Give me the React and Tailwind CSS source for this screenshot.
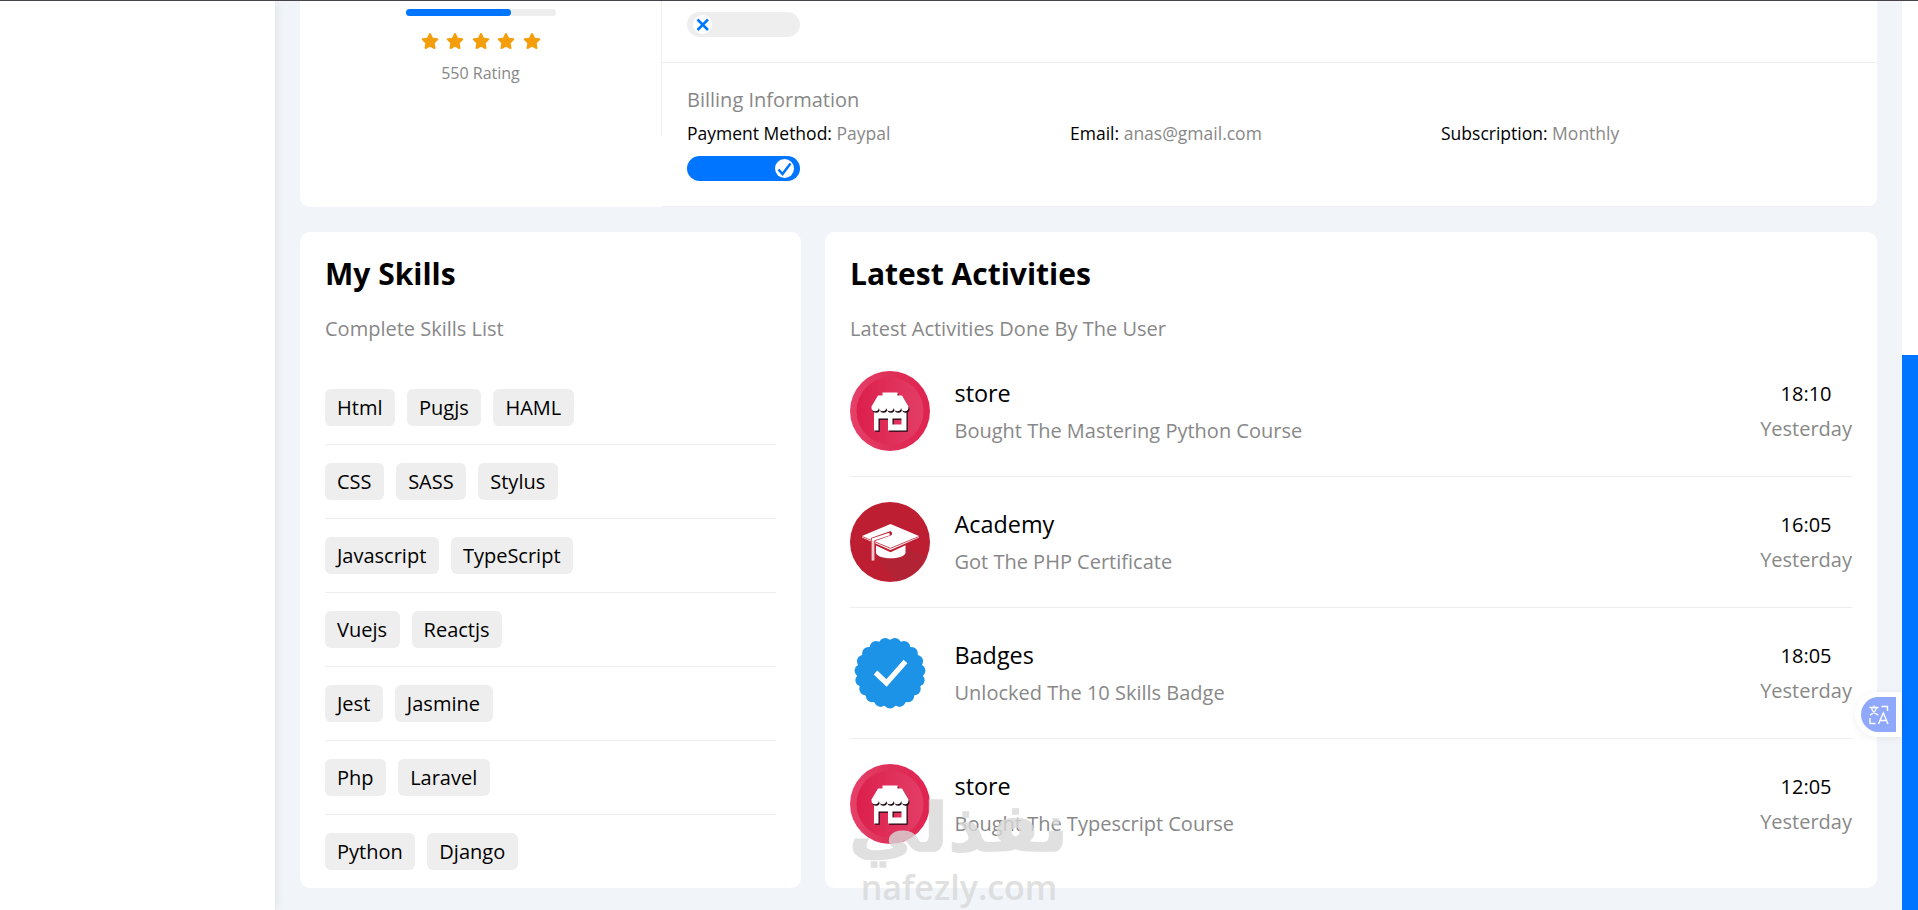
import { FaStar } from 'react-icons/fa6';

const skills = [
  ['Html', 'Pugjs', 'HAML'],
  ['CSS', 'SASS', 'Stylus'],
  ['Javascript', 'TypeScript'],
  ['Vuejs', 'Reactjs'],
  ['Jest', 'Jasmine'],
  ['Php', 'Laravel'],
  ['Python', 'Django'],
];

const activities = [
  { icon: 'store', title: 'store', text: 'Bought The Mastering Python Course', time: '18:10' },
  { icon: 'academy', title: 'Academy', text: 'Got The PHP Certificate', time: '16:05' },
  { icon: 'badge', title: 'Badges', text: 'Unlocked The 10 Skills Badge', time: '18:05' },
  { icon: 'store', title: 'store', text: 'Bought The Typescript Course', time: '12:05' },
];

const shopWalls = 'M24 38h32.500v21.500H38V47.500H28.500V59.500H24zM42.500 47.500v6h9v-6z';
const shopRoof =
  'M32.500 21.500h15v3h4.500L58.500 35.500v1a3.700 3.700 0 0 1-7.400 0a3.700 3.700 0 0 1-7.400 0a3.700 3.700 0 0 1-7.400 0a3.700 3.700 0 0 1-7.400 0a3.700 3.700 0 0 1-7.400 0v-1L28 24.500h4.500z';

function StoreIcon() {
  return (
    <svg viewBox="0 0 80 80" className="size-20">
      <defs>
        <linearGradient id="storeRing" x1="0" y1="0" x2="1" y2="0">
          <stop offset="0" stopColor="#e6416a" />
          <stop offset="0.5" stopColor="#de3059" />
          <stop offset="1" stopColor="#e02350" />
        </linearGradient>
        <linearGradient id="storeFace" x1="0" y1="0" x2="1" y2="0">
          <stop offset="0" stopColor="#dc1f4c" />
          <stop offset="1" stopColor="#e23e66" />
        </linearGradient>
      </defs>
      <circle cx="40" cy="40" r="40" fill="url(#storeRing)" />
      <circle cx="40" cy="40" r="33.500" fill="url(#storeFace)" />
      {/* each part is drawn over its own dark shadow */}
      <g fillRule="evenodd">
        <path d={shopWalls} fill="#1d0610" transform="translate(1.200 1.200)" />
        <path d={shopWalls} fill="#fff" />
        <path d={shopRoof} fill="#1d0610" transform="translate(0.900 1.500)" />
        <path d={shopRoof} fill="#fff" />
      </g>
    </svg>
  );
}

function AcademyIcon() {
  return (
    <svg viewBox="0 0 80 80" className="size-20">
      <circle cx="40" cy="40" r="40" fill="#be1e32" />
      <path d="M26 54L56 46L77 56A40 40 0 0 1 46 79.500z" fill="#a8283a" opacity="0.5" />
      <path d="M26 41L40.500 48L55.500 41V51c-2 7-27.500 7-29.500 0z" fill="#fff" />
      <path d="M12 35.500L40.500 48.500L69 35.500" fill="none" stroke="#be1e32" strokeWidth="3" />
      <path d="M12 34L40.500 22L69 34V35.500L40.500 48L12 35.500z" fill="#fff" />
      <path d="M12 34.500L40.500 46.300L69 34.500" fill="none" stroke="#be1e32" strokeWidth="0.800" />
      <path d="M40 31.500L23 37.500V58" fill="none" stroke="#be1e32" strokeWidth="4.200" strokeLinecap="round" />
      <path d="M39.500 32L23 37.500V58.500" fill="none" stroke="#fff" strokeWidth="2.600" />
      <path d="M23 39V58.500" fill="none" stroke="#be1e32" strokeWidth="0.500" />
    </svg>
  );
}

const scallops = Array.from({ length: 19 }, (_, i) => {
  const angle = (i / 19) * Math.PI * 2 + Math.PI / 2;
  return { x: 40 + Math.cos(angle) * 29.3, y: 40 + Math.sin(angle) * 29.3 };
});

function BadgeIcon() {
  return (
    <svg viewBox="0 0 80 80" className="size-20">
      <g fill="#1c93e6">
        <circle cx="40" cy="40" r="33.300" />
        {scallops.map((s, i) => (
          <circle key={i} cx={s.x} cy={s.y} r="6.200" />
        ))}
      </g>
      <path d="M25.500 39.500L36.500 50L55.500 28.500" fill="none" stroke="#fff" strokeWidth="5.200" />
    </svg>
  );
}

function ActivityIcon({ name }) {
  if (name === 'store') return <StoreIcon />;
  if (name === 'academy') return <AcademyIcon />;
  return <BadgeIcon />;
}

function Toggle({ on }) {
  return (
    <div
      className={`flex h-[25px] w-[113px] items-center rounded-full px-[6px] ${
        on ? 'justify-end bg-[#0075ff]' : 'bg-[#eee]'
      }`}
    >
      <div className="flex size-[19px] items-center justify-center rounded-full bg-white">
        <svg viewBox="0 0 19 19" className="size-[19px]" fill="none" stroke="#0075ff" strokeWidth="2.500">
          {on ? <path d="M3.500 10.500L7.500 15L15.500 4.500" /> : <path d="M4.500 4.500L15 15M15 4.500L4.500 15" />}
        </svg>
      </div>
    </div>
  );
}

function Field({ label, value, className }) {
  return (
    <div className={className}>
      <span>{label}: </span>
      <span className="text-[#888]">{value}</span>
    </div>
  );
}

function ProfileCard() {
  return (
    <section className="flex h-[206px] overflow-hidden rounded-b-[10px] bg-white">
      <div className="flex h-[135px] w-[362px] shrink-0 flex-col items-center border-r border-[#eee] pt-2">
        <div className="h-[7px] w-[150px] rounded-full bg-[#eee]">
          <div className="h-full rounded-full bg-[#0075ff]" style={{ width: '70%' }} />
        </div>
        <div className="mt-4 flex gap-[7.500px] text-lg text-[#f59e0b]">
          {[1, 2, 3, 4, 5].map((n) => (
            <FaStar key={n} />
          ))}
        </div>
        <p className="mt-[11px] text-base leading-6 text-[#888]">550 Rating</p>
      </div>
      <div className="flex flex-1 flex-col border-b border-[#eee]">
        <div className="h-[62px] border-b border-[#eee] px-[25px] pt-[11px]">
          <Toggle />
        </div>
        <div className="px-[25px] pt-[23px]">
          <h4 className="text-xl leading-[27px] text-[#888]">Billing Information</h4>
          <div className="mt-2 flex text-[17.5px] leading-6">
            <Field className="w-[383px]" label="Payment Method" value="Paypal" />
            <Field className="w-[371px]" label="Email" value="anas@gmail.com" />
            <Field label="Subscription" value="Monthly" />
          </div>
          <div className="mt-[11px]">
            <Toggle on />
          </div>
        </div>
      </div>
    </section>
  );
}

function SkillsCard() {
  return (
    <section className="h-[656px] w-[501px] shrink-0 rounded-[10px] bg-white px-[25px] pt-[21px]">
      <h2 className="text-3xl leading-[42px] font-bold">My Skills</h2>
      <p className="mt-[20px] text-xl leading-[27px] text-[#888]">Complete Skills List</p>
      <ul className="mt-[29px]">
        {skills.map((row) => (
          <li key={row[0]} className="flex h-[74px] items-center gap-3 border-b border-[#eee] last:border-transparent">
            {row.map((name) => (
              <span key={name} className="h-[37px] rounded-md bg-[#eee] pr-[12.6px] pl-3 text-xl leading-[37px]">
                {name}
              </span>
            ))}
          </li>
        ))}
      </ul>
    </section>
  );
}

function ActivitiesCard() {
  return (
    <section className="h-[656px] flex-1 rounded-[10px] bg-white px-[25px] pt-[21px]">
      <h2 className="text-3xl leading-[42px] font-bold">Latest Activities</h2>
      <p className="mt-[20px] text-xl leading-[27px] text-[#888]">Latest Activities Done By The User</p>
      <ul className="mt-[4px]">
        {activities.map((item, i) => (
          <li key={i} className="flex h-[131px] items-center border-b border-[#eee] last:border-transparent">
            <ActivityIcon name={item.icon} />
            <div className="ml-[24.5px] flex-1">
              <h3 className="text-[23.4px] leading-[31px]">{item.title}</h3>
              <p className="mt-2 text-xl leading-[27px] text-[#888]">{item.text}</p>
            </div>
            <div className="text-center text-xl leading-[27px]">
              <p>{item.time}</p>
              <p className="mt-2 text-[#888]">Yesterday</p>
            </div>
          </li>
        ))}
      </ul>
    </section>
  );
}

// Browser extension button stuck to the right edge
function TranslateButton() {
  return (
    <div className="absolute top-[691px] right-4 h-[45px] w-[47px] rounded-l-full bg-white pt-[5px] pl-[6px] shadow-[0_2px_10px_rgba(0,0,0,0.06)]">
      <div className="flex h-[35px] w-[35px] items-center justify-center rounded-l-full rounded-r-[3px] bg-[#8fa8fb]">
        <svg viewBox="0 0 20 20" className="size-5" fill="none" stroke="#fff" strokeWidth="1.400">
          <path d="M0.500 2.500H9.500M5 0.500V2.500M1 10C5 8 7 5.500 7.500 2.500M2.500 2.500C3 5.500 5 8.500 9.300 10" />
          <path d="M12.500 1.500H18.500V6M1 13V18.500H6.500M9.500 19L14.300 8L19 19M11 15.500H17.500" />
        </svg>
      </div>
    </div>
  );
}

function Watermark() {
  return (
    <div className="pointer-events-none absolute top-[784px] left-[853px] flex w-[212px] flex-col items-center text-[#d9d9d9] opacity-80">
      <span
        dir="rtl"
        className="scale-x-[1.07] font-['DejaVu_Sans',sans-serif] text-[67px] leading-[86px] font-bold whitespace-nowrap [-webkit-text-stroke:1.5px_#d9d9d9]"
      >
        نفذلي
      </span>
      <span className="text-[34px] leading-[32px] font-semibold">nafezly.com</span>
    </div>
  );
}

export default function App() {
  return (
    <div className="relative flex h-[910px] w-[1918px] overflow-hidden border-t border-[#45424a] bg-[#f1f5f9] font-['Open_Sans',sans-serif] text-black">
      <aside className="z-10 w-[275px] shrink-0 bg-white shadow-[0_0_10px_#ddd]" />
      <main className="flex flex-1 flex-col gap-[25px] px-[25px]">
        <ProfileCard />
        <div className="flex gap-6">
          <SkillsCard />
          <ActivitiesCard />
        </div>
      </main>
      <div className="w-4 shrink-0 bg-white pt-[354px]">
        <div className="h-full bg-[#0075ff]" />
      </div>
      <TranslateButton />
      <Watermark />
    </div>
  );
}
